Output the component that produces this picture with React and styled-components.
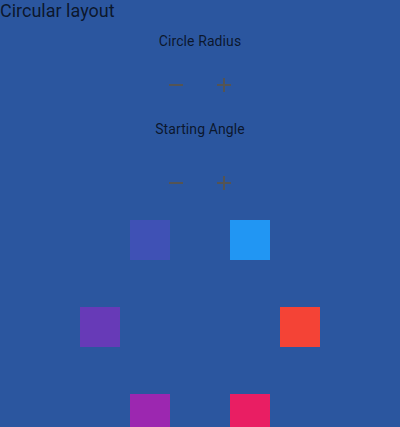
import React from "react";
import styled, { createGlobalStyle } from "styled-components";

const GlobalStyle = createGlobalStyle`
  html, body {
    margin: 0;
    padding: 0;
    background-color: #2b569f;
    font-family: Roboto, "Liberation Sans", sans-serif;
  }
`;

const Page = styled.div`
  width: 400px;
  height: 427px;
  overflow: hidden;
  color: rgba(0, 0, 0, 0.74);
`;

const Title = styled.div`
  font-size: 18px;
  line-height: 21px;
  margin: 0;
`;

const Control = styled.div`
  display: flex;
  flex-direction: column;
  align-items: center;
  margin-top: ${(props) => props.top};
`;

const Label = styled.div`
  font-size: 14px;
  line-height: 16px;
  letter-spacing: 0.1px;
`;

const ButtonRow = styled.div`
  display: flex;
  flex-direction: row;
  margin-top: ${(props) => props.gap};
`;

const IconButton = styled.button`
  width: 48px;
  height: 48px;
  padding: 0;
  border: none;
  background: transparent;
  display: flex;
  align-items: center;
  justify-content: center;
  color: #545454;
  cursor: pointer;
`;

const Canvas = styled.div`
  position: relative;
  width: 400px;
  height: 240px;
`;

const Square = styled.div`
  position: absolute;
  width: 40px;
  height: 40px;
  background-color: ${(props) => props.color};
  transform: translate(-50%, -50%);
`;

const RemoveIcon = () => (
  <svg width="24" height="24" viewBox="0 0 24 24" fill="currentColor">
    <path d="M19 13H5v-2h14v2z" />
  </svg>
);

const AddIcon = () => (
  <svg width="24" height="24" viewBox="0 0 24 24" fill="currentColor">
    <path d="M19 13h-6v6h-2v-6H5v-2h6V5h2v6h6v2z" />
  </svg>
);

const colors = ["#F44336", "#E91E63", "#9C27B0", "#673AB7", "#3F51B5", "#2196F3"];

const radius = 100;
const startAngle = 0;

const App = () => {
  return (
    <Page>
      <GlobalStyle />
      <Title>Circular layout</Title>

      <Control top="12px">
        <Label>Circle Radius</Label>
        <ButtonRow gap="12px">
          <IconButton><RemoveIcon /></IconButton>
          <IconButton><AddIcon /></IconButton>
        </ButtonRow>
      </Control>

      <Control top="12px">
        <Label>Starting Angle</Label>
        <ButtonRow gap="22px">
          <IconButton><RemoveIcon /></IconButton>
          <IconButton><AddIcon /></IconButton>
        </ButtonRow>
      </Control>

      <Canvas>
        {colors.map((c, i) => {
          const a = ((startAngle + i * 60) * Math.PI) / 180;
          return (
            <Square
              key={c}
              color={c}
              style={{ left: 200 + radius * Math.cos(a), top: 120 + radius * Math.sin(a) }}
            />
          );
        })}
      </Canvas>
    </Page>
  );
};

export default App;
